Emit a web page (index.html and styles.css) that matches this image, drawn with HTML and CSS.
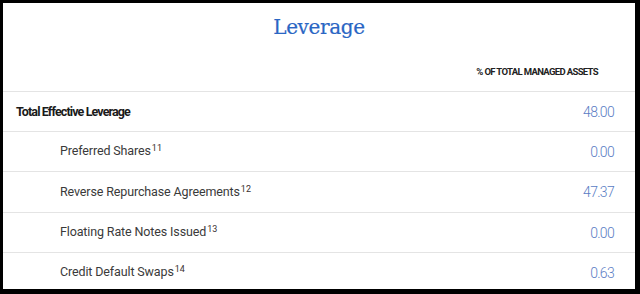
FILE: index.html
```html
<!DOCTYPE html>
<html lang="en">
<head>
<meta charset="utf-8">
<title>Leverage</title>
<link rel="stylesheet" href="styles.css">
</head>
<body>
<div class="frame">
  <section class="panel">
    <h1 class="title">Leverage</h1>
    <div class="row head">
      <span class="label"></span>
      <span class="colhead">% OF TOTAL MANAGED ASSETS</span>
    </div>
    <div class="row total">
      <span class="label">Total Effective Leverage</span>
      <span class="value">48.00</span>
    </div>
    <div class="row sub">
      <span class="label">Preferred Shares<sup>11</sup></span>
      <span class="value">0.00</span>
    </div>
    <div class="row sub tall">
      <span class="label">Reverse Repurchase Agreements<sup>12</sup></span>
      <span class="value">47.37</span>
    </div>
    <div class="row sub">
      <span class="label">Floating Rate Notes Issued<sup>13</sup></span>
      <span class="value">0.00</span>
    </div>
    <div class="row sub last">
      <span class="label">Credit Default Swaps<sup>14</sup></span>
      <span class="value">0.63</span>
    </div>
  </section>
</div>
</body>
</html>
```
FILE: styles.css
```css
html, body {
  margin: 0;
  padding: 0;
  background: #000;
  width: 640px;
  height: 294px;
  overflow: hidden;
}
.frame {
  padding: 3px 5px 5px 3px;
  height: 286px;
}
.panel {
  background: #fff;
  height: 286px;
  overflow: hidden;
  font-family: Roboto, "Liberation Sans", sans-serif;
  color: #333;
}
.title {
  margin: 0;
  height: 52px;
  padding: 13px 0 17px;
  box-sizing: border-box;
  text-align: center;
  font-family: "DejaVu Serif", "Liberation Serif", serif;
  font-weight: normal;
  font-size: 20px;
  line-height: 22px;
  color: #2a66c4;
  letter-spacing: -0.35px;
  -webkit-text-stroke: 0.2px #2a66c4;
}
.row {
  display: flex;
  justify-content: space-between;
  align-items: center;
  height: 40px;
  border-bottom: 1px solid #e4e4e4;
  padding: 0 21px 0 13px;
  box-sizing: border-box;
}
.row.tall {
  height: 41px;
}
.row.head {
  height: 37px;
  align-items: flex-start;
  padding-top: 11px;
}
.colhead {
  font-weight: bold;
  font-size: 9.5px;
  letter-spacing: -0.65px;
  color: #222;
  padding-right: 16px;
}
.total .label {
  font-weight: bold;
  font-size: 12.5px;
  letter-spacing: -0.88px;
  color: #1a1a1a;
}
.sub .label {
  padding-left: 44px;
  font-size: 12.5px;
  letter-spacing: -0.13px;
  color: #3a3a3a;
  margin-top: -2px;
}
.value {
  font-weight: 300;
  font-size: 14px;
  letter-spacing: -0.7px;
  color: #5a7cc4;
}
sup {
  font-size: 9px;
  letter-spacing: 0;
  margin-left: 1px;
  vertical-align: 4px;
  line-height: 0;
  color: #3a3030;
}
```
